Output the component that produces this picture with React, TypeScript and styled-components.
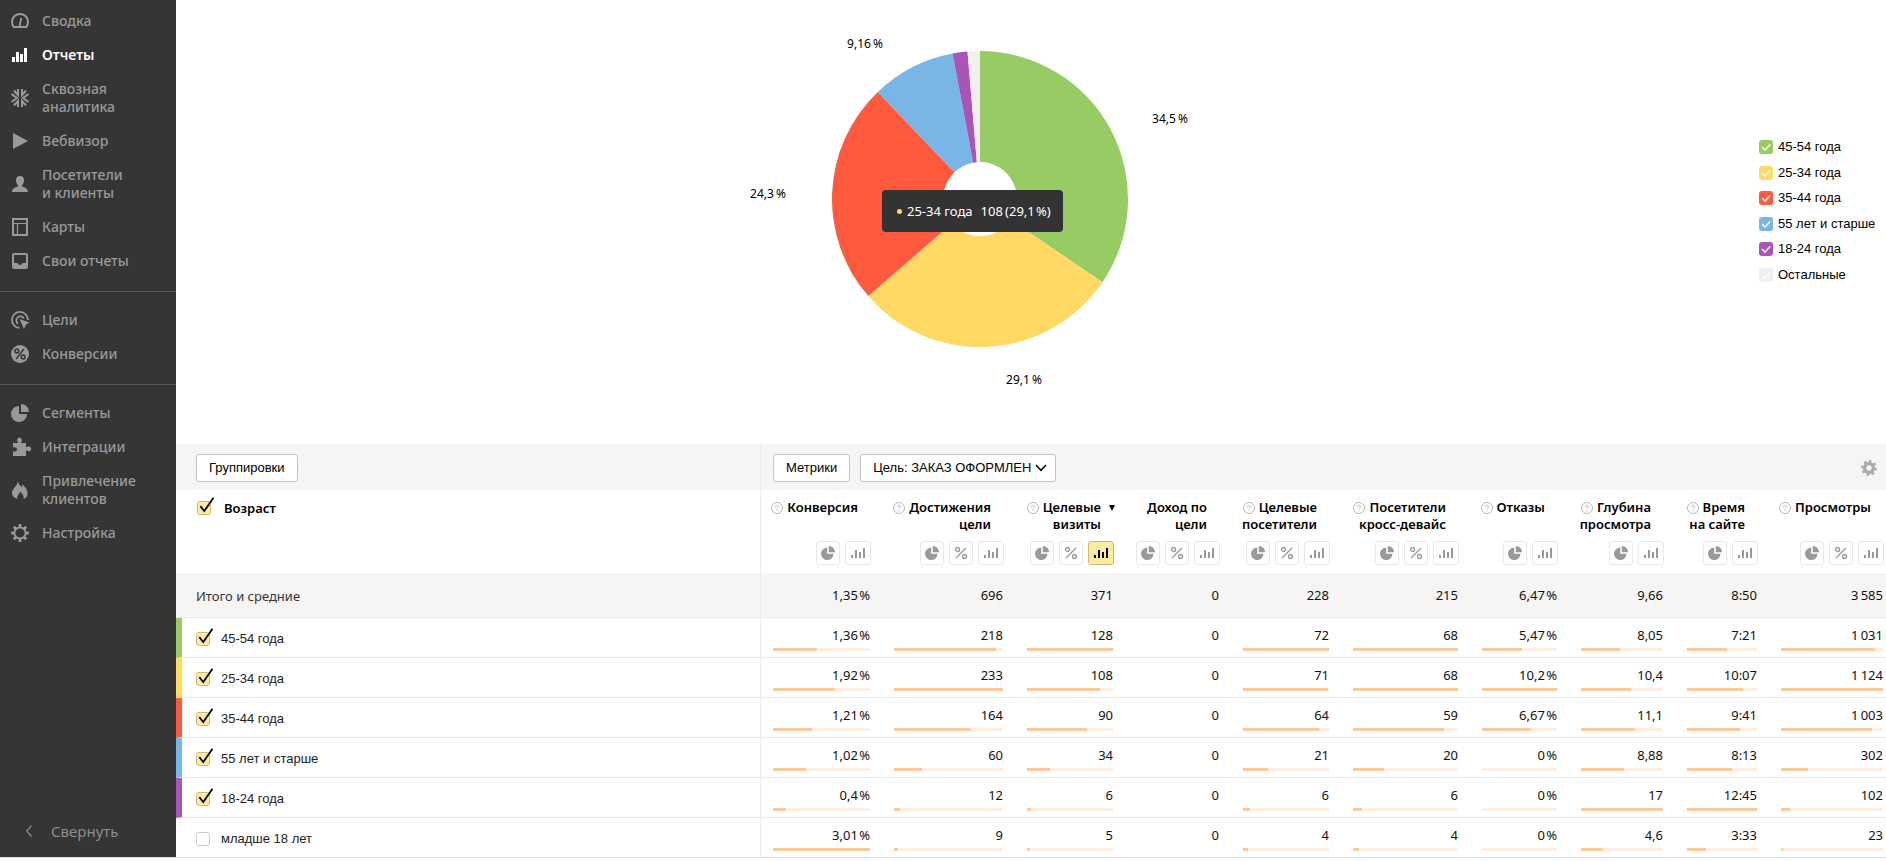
import React from 'react';
import styled, { createGlobalStyle } from 'styled-components';

const TEXT = '"Noto Sans", "Open Sans", sans-serif';
const CONTROL = '"Liberation Sans", Arial, sans-serif';

const GlobalStyle = createGlobalStyle`
  *, *::before, *::after { box-sizing: border-box; }
  body { margin: 0; background: #fff; color: #000; font-family: ${TEXT}; font-size: 13px; }
`;

/* ---------- shell ---------- */

const Page = styled.div`
  display: flex;
  align-items: stretch;
  border-bottom: 1px solid #ddd;
`;

const Sidebar = styled.nav`
  flex: none;
  width: 176px;
  padding: 4px 0 9px;
  display: flex;
  flex-direction: column;
  background: #353535;
`;

const MenuGroup = styled.ul`
  list-style: none;
  margin: 0;
  padding: 0 0 13px;

  & + & {
    border-top: 1px solid #555;
    padding-top: 11px;
  }
`;

const MenuLink = styled.a<{ $active?: boolean }>`
  display: flex;
  align-items: center;
  gap: 13px;
  padding: 8px 10px 8px 11px;
  color: ${(p) => (p.$active ? '#fff' : '#999')};
  font-size: 14px;
  font-weight: ${(p) => (p.$active ? 600 : 500)};
  line-height: 18px;
  text-decoration: none;
  white-space: pre-line;

  svg { flex: none; overflow: visible; }
`;

const Collapse = styled.button`
  display: flex;
  align-items: center;
  gap: 19px;
  margin-top: auto;
  padding: 8px 26px;
  border: 0;
  background: none;
  color: #8c8c8c;
  font: 15px/18px ${TEXT};
`;

const Main = styled.main`
  flex: 1;
  min-width: 0;
`;

/* ---------- chart ---------- */

const ChartArea = styled.section`
  display: flex;
  height: 444px;
  padding-left: 25px;
`;

const Plot = styled.div`
  flex: 1;
  display: flex;
  justify-content: center;
`;

const Canvas = styled.div`
  position: relative;
  width: 500px;
  height: 398px;

  svg { display: block; font-family: ${TEXT}; font-size: 12px; }
`;

const Tooltip = styled.div`
  position: absolute;
  left: 152px;
  top: 190px;
  display: flex;
  align-items: center;
  width: 181px;
  height: 42px;
  padding-left: 15px;
  border-radius: 4px;
  background: #333;
  color: #fff;
  font-size: 13px;
  line-height: 18px;
  white-space: pre;
`;

const Dot = styled.span`
  width: 5px;
  height: 5px;
  margin-right: 5px;
  border-radius: 50%;
  background: #ffd963;
`;

const TooltipValue = styled.span`
  margin-left: 8px;
`;

const Legend = styled.div`
  flex: none;
  width: 127px;
  height: 142px;
  margin-top: 140px;
  display: flex;
  flex-direction: column;
  justify-content: space-between;
`;

const LegendItem = styled.label`
  display: flex;
  align-items: center;
  gap: 5px;
  font: 13px/14px ${CONTROL};
  white-space: nowrap;
`;

const LegendBox = styled.span<{ $color: string }>`
  position: relative;
  display: block;
  width: 14px;
  height: 14px;
  border-radius: 3px;
  background: ${(p) => p.$color};

  input { position: absolute; inset: 0; margin: 0; opacity: 0; }
  svg { display: block; }
`;

/* ---------- toolbar ---------- */

const Toolbar = styled.div`
  display: grid;
  grid-template-columns: minmax(0, 1fr) 1125px;
  height: 46px;
  background: #f6f5f3;
`;

const ToolbarCell = styled.div<{ $first?: boolean }>`
  display: flex;
  align-items: center;
  gap: 10px;
  padding: 2px 9px 0 ${(p) => (p.$first ? 20 : 12)}px;
  border-right: ${(p) => (p.$first ? '1px solid #ebebeb' : '0')};
`;

const ToolButton = styled.button`
  height: 28px;
  padding: 0 12px;
  border: 1px solid #c4c3c1;
  border-radius: 3px;
  background: #fff;
  color: #000;
  font: 13px/18px ${CONTROL};
`;

const SelectBox = styled.label`
  position: relative;

  select {
    appearance: none;
    width: 196px;
    height: 28px;
    padding: 0 24px 0 12px;
    border: 1px solid #c4c3c1;
    border-radius: 3px;
    background: #fff;
    color: #000;
    font: 13px/18px ${CONTROL};
  }

  svg { position: absolute; right: 9px; top: 10px; pointer-events: none; }
`;

const GearButton = styled.button`
  width: 16px;
  height: 16px;
  margin-left: auto;
  padding: 0;
  border: 0;
  background: none;
  color: #aaa;

  svg { display: block; }
`;

/* ---------- table ---------- */

const Table = styled.table`
  width: 100%;
  table-layout: fixed;
  border-collapse: separate;
  border-spacing: 0;
`;

const Head = styled.th<{ $first?: boolean }>`
  height: 83px;
  padding: ${(p) => (p.$first ? '9px 20px 0 21px' : '9px 11px 0 6px')};
  vertical-align: top;
  text-align: ${(p) => (p.$first ? 'left' : 'right')};
  font-weight: 600;
  border-right: ${(p) => (p.$first ? '1px solid #ebebeb' : '0')};

  &:last-child { padding-right: 2px; }
`;

const HeadTitle = styled.div`
  position: relative;
  height: 42px;
  padding-right: 13px;
  font-size: 13px;
  line-height: 17px;
  white-space: pre;
`;

const Help = styled.svg`
  width: 12px;
  height: 12px;
  margin-right: 4px;
  vertical-align: -2px;
`;

const SortMark = styled.span`
  position: absolute;
  right: -1px;
  top: 6px;
  border: 3px solid transparent;
  border-top: 6px solid #000;
  border-bottom: 0;
`;

const Chips = styled.div`
  display: flex;
  justify-content: flex-end;
  gap: 5px;
`;

const Chip = styled.button<{ $wide?: boolean; $active?: boolean }>`
  display: flex;
  align-items: center;
  justify-content: center;
  flex: none;
  width: ${(p) => (p.$wide ? 26 : 24)}px;
  height: 24px;
  padding: 0;
  border: 1px solid ${(p) => (p.$active ? '#ccb975' : '#e8e8e8')};
  border-radius: 3px;
  background: ${(p) => (p.$active ? '#ffeba0' : '#fff')};
  color: ${(p) => (p.$active ? '#000' : '#999')};
`;

const TotalCell = styled.td<{ $first?: boolean }>`
  height: 45px;
  padding: 0 12px;
  background: #f6f5f3;
  border-bottom: 1px solid #ebebeb;
  text-align: right;
  line-height: 18px;
  color: #111;

  &:last-child { padding-right: 3px; }

  ${(p) => p.$first && `
    padding: 2px 20px 0;
    text-align: left;
    border-right: 1px solid #ebebeb;
    color: #333;
  `}
`;

const Row = styled.tr`
  & > * { height: 40px; border-bottom: 1px solid #ebebeb; }
  &:last-child > * { height: 39px; border-bottom: 0; }
`;

const RowHead = styled.th<{ $color: string }>`
  padding: 3px 20px 0 14px;
  border-left: 6px solid ${(p) => p.$color};
  border-right: 1px solid #ebebeb;
  font: 13px/18px ${CONTROL};
  color: #222;
  text-align: left;
`;

const Cell = styled.td`
  padding: 8px 12px 0;
  vertical-align: top;
  text-align: right;
  line-height: 18px;
  color: #111;

  &:last-child { padding-right: 3px; }
`;

const Bar = styled.div`
  height: 3px;
  margin-top: 4px;
  background: #ffeee0;
`;

const BarFill = styled.div`
  height: 3px;
  background: #fbcb9c;
`;

const CheckLabel = styled.label<{ $gap: number }>`
  display: flex;
  align-items: center;
  gap: ${(p) => p.$gap}px;
  line-height: 18px;
`;

const Box = styled.span`
  position: relative;
  flex: none;
  width: 14px;
  height: 14px;

  input {
    appearance: none;
    display: block;
    width: 14px;
    height: 14px;
    margin: 0;
    border: 1px solid #ccc;
    border-radius: 3px;
    background: #fff;
  }
  input:checked { border-color: #ccb975; background: #ffeba0; }

  svg { position: absolute; left: 0; top: 0; overflow: visible; pointer-events: none; }
`;

/* ---------- icons ---------- */

const PIE_MARK = 'M8 2 V10 H16 A8 8 0 1 1 8 2 Z M10 0 A8 8 0 0 1 18 8 H10 Z';

const gearPath = (teeth: number, outer: number, inner: number) => {
  const step = (Math.PI * 2) / teeth;
  const pts: string[] = [];
  for (let i = 0; i < teeth; i += 1) {
    const a = i * step - Math.PI / 2;
    [[-0.28, inner], [-0.2, outer], [0.2, outer], [0.28, inner]].forEach(([k, r]) => {
      const t = a + k * step;
      pts.push(`${(Math.cos(t) * r).toFixed(2)} ${(Math.sin(t) * r).toFixed(2)}`);
    });
  }
  return `M${pts.join('L')}Z`;
};

const ICONS: Record<string, React.ReactNode> = {
  gauge: (
    <g fill="none" stroke="currentColor" strokeWidth="2">
      <path d="M2.8 15 A8 8 0 1 1 15.2 15 Z" strokeLinejoin="round" />
      <path d="M8.6 14 L10.2 6" strokeWidth="1.8" />
    </g>
  ),
  bars: <path fill="currentColor" d="M1 11h3v5H1zM5 6h3v10H5zM9 8h3v8H9zM13 2h3v14h-3z" />,
  flake: (
    <g fill="none" stroke="currentColor" strokeWidth="2">
      <path d="M.5 5 L6 9 L.5 13 M17.500 5 L12 9 L17.500 13" />
      <path d="M7 0 V6 L3 1.500 M11 0 V6 L15 1.500 M7 18 V12 L3 16.500 M11 18 V12 L15 16.500" />
    </g>
  ),
  play: <path fill="currentColor" d="M2 1 L17 9 L2 17 Z" />,
  person: (
    <path
      fill="currentColor"
      d="M9 1c2.800 0 4.200 2 4 4.500c-.1 2-.9 3.600-1.800 4.500v1.600c1.500 .8 5.800 1.200 5.800 5.400H1c0-4.200 4.300-4.600 5.800-5.400V10C5.900 9.100 5.100 7.500 5 5.500C4.800 3 6.200 1 9 1z"
    />
  ),
  map: (
    <g fill="none" stroke="currentColor">
      <rect x="2" y="1" width="14" height="16" strokeWidth="2" />
      <path d="M2 5.500H16 M6.500 5V17" strokeWidth="1.200" />
    </g>
  ),
  inbox: (
    <path
      fill="currentColor"
      fillRule="evenodd"
      d="M3 1h12a2 2 0 0 1 2 2v12a2 2 0 0 1-2 2H3a2 2 0 0 1-2-2V3a2 2 0 0 1 2-2zM3 3v8h3c.6 0 .8 .7 1.200 1.300c.9 1 2.700 1 3.600 0c.4-.6 .6-1.300 1.200-1.300h3V3z"
    />
  ),
  target: (
    <g fill="none" stroke="currentColor" strokeWidth="1.800">
      <path d="M8.500 16.900 A8 8 0 1 1 16.900 9" />
      <path d="M7 12.700 A4 4 0 1 1 12.800 7.500" />
      <path d="M8.500 8 L18.500 11.500 L15 13.500 L13 18 Z" fill="currentColor" stroke="none" />
    </g>
  ),
  percent: (
    <g>
      <circle cx="9" cy="9" r="9" fill="currentColor" />
      <g fill="none" stroke="#353535" strokeWidth="1.500">
        <circle cx="5.800" cy="6" r="1.900" />
        <circle cx="12.200" cy="12" r="1.900" />
        <path d="M12.800 4 L5.200 14" />
      </g>
    </g>
  ),
  pie: <path fill="currentColor" d={PIE_MARK} />,
  puzzle: (
    <path
      fill="currentColor"
      d="M2 5h4.800V4a2.500 2.500 0 1 1 3.400 0v1H15v4h1.200a2.400 2.400 0 1 1 0 3.600H15V18H2v-4.500h1.200a2.200 2.200 0 1 0 0-4.200H2z"
    />
  ),
  fire: (
    <path
      fill="currentColor"
      d="M6.800 0c.4 2.800 1.600 3.700 3.800 6.200c.6-1 .9-1.800 1-3c2.200 2.600 5 5.400 5 9c0 2.800-1.600 5-4.100 5.800c.8-2.800-1-5.200-3.500-7.500c-.3 2.500-3.500 3.900-2.500 7.500C3.500 17.200 1 15 1 11.800C1 7.500 6.600 5.500 6.800 0z"
    />
  ),
  gear: (
    <path
      transform="translate(9 9)"
      fill="currentColor"
      fillRule="evenodd"
      d={`${gearPath(8, 9, 6.5)}M4.600 0A4.600 4.600 0 1 0-4.600 0A4.600 4.600 0 1 0 4.600 0Z`}
    />
  ),
};

const MenuIcon = ({ name }: { name: string }) => (
  <svg width="18" height="18" viewBox="0 0 18 18" aria-hidden="true">{ICONS[name]}</svg>
);

const ChipIcon = ({ kind }: { kind: ChipKind }) => (
  <svg width="14" height="14" viewBox="0 0 14 14" aria-hidden="true">
    {kind === 'pie' && <path fill="currentColor" transform="scale(.78)" d={PIE_MARK} />}
    {kind === 'percent' && (
      <g fill="none" stroke="currentColor" strokeWidth="1.300">
        <circle cx="3.500" cy="3.500" r="2" />
        <circle cx="10.500" cy="10.500" r="2" />
        <path d="M12 2 L2 12" />
      </g>
    )}
    {kind === 'bars' && <path fill="currentColor" d="M0 9h2v3H0zM4 4h2v8H4zM8 6h2v6H8zM12 2h2v10h-2z" />}
  </svg>
);

const HelpIcon = () => (
  <Help viewBox="0 0 12 12" aria-hidden="true">
    <circle cx="6" cy="6" r="5.500" fill="none" stroke="#b8b8b8" />
    <path d="M4.500 4.800a1.500 1.500 0 1 1 2.300 1.200q-.8 .5-.8 1.200M6 8.200v1" fill="none" stroke="#b8b8b8" />
  </Help>
);

/* ---------- data ---------- */

const MENU = [
  [
    ['gauge', 'Сводка'],
    ['bars', 'Отчеты'],
    ['flake', 'Сквозная\nаналитика'],
    ['play', 'Вебвизор'],
    ['person', 'Посетители\nи клиенты'],
    ['map', 'Карты'],
    ['inbox', 'Свои отчеты'],
  ],
  [
    ['target', 'Цели'],
    ['percent', 'Конверсии'],
  ],
  [
    ['pie', 'Сегменты'],
    ['puzzle', 'Интеграции'],
    ['fire', 'Привлечение\nклиентов'],
    ['gear', 'Настройка'],
  ],
];

const SLICES = [
  { name: '45-54 года', color: '#97cc64', visits: 128 },
  { name: '25-34 года', color: '#ffd963', visits: 108 },
  { name: '35-44 года', color: '#ff5a3e', visits: 90 },
  { name: '55 лет и старше', color: '#77b6e7', visits: 34 },
  { name: '18-24 года', color: '#a955b8', visits: 6 },
  { name: 'Остальные', color: '#f1f0ec', visits: 5 },
];

const CALLOUTS = [
  { x: 190, y: -76, text: '34,5\u2009%' },
  { x: 44, y: 185, text: '29,1\u2009%' },
  { x: -212, y: -1, text: '24,3\u2009%' },
  { x: -115, y: -151, text: '9,16\u2009%' },
];

type ChipKind = 'pie' | 'percent' | 'bars';

const TWO: ChipKind[] = ['pie', 'bars'];
const THREE: ChipKind[] = ['pie', 'percent', 'bars'];

const METRICS = [
  { title: 'Конверсия', width: 121, chips: TWO, help: true, bar: true },
  { title: 'Достижения\nцели', width: 133, chips: THREE, help: true, bar: true },
  { title: 'Целевые\nвизиты', width: 110, chips: THREE, help: true, bar: true, sorted: true },
  { title: 'Доход по\nцели', width: 106, chips: THREE, help: false, bar: false },
  { title: 'Целевые\nпосетители', width: 110, chips: THREE, help: true, bar: true },
  { title: 'Посетители\nкросс-девайс', width: 129, chips: THREE, help: true, bar: true },
  { title: 'Отказы', width: 99, chips: TWO, help: true, bar: true },
  { title: 'Глубина\nпросмотра', width: 106, chips: TWO, help: true, bar: true },
  { title: 'Время\nна сайте', width: 94, chips: TWO, help: true, bar: true },
  { title: 'Просмотры', width: 117, chips: THREE, help: true, bar: true },
];

const TOTALS = ['1,35\u200A%', '696', '371', '0', '228', '215', '6,47\u200A%', '9,66', '8:50', '3\u2009585'];

const ROWS = [
  { name: '45-54 года', color: '#97cc64', values: ['1,36\u200A%', '218', '128', '0', '72', '68', '5,47\u200A%', '8,05', '7:21', '1\u2009031'] },
  { name: '25-34 года', color: '#ffd963', values: ['1,92\u200A%', '233', '108', '0', '71', '68', '10,2\u200A%', '10,4', '10:07', '1\u2009124'] },
  { name: '35-44 года', color: '#ff5a3e', values: ['1,21\u200A%', '164', '90', '0', '64', '59', '6,67\u200A%', '11,1', '9:41', '1\u2009003'] },
  { name: '55 лет и старше', color: '#77b6e7', values: ['1,02\u200A%', '60', '34', '0', '21', '20', '0\u200A%', '8,88', '8:13', '302'] },
  { name: '18-24 года', color: '#a955b8', values: ['0,4\u200A%', '12', '6', '0', '6', '6', '0\u200A%', '17', '12:45', '102'] },
  { name: 'младше 18 лет', color: '', values: ['3,01\u200A%', '9', '5', '0', '4', '4', '0\u200A%', '4,6', '3:33', '23'] },
];

const toNumber = (s: string) => {
  if (s.includes(':')) {
    const [m, sec] = s.split(':').map(Number);
    return m * 60 + sec;
  }
  return Number(s.replace(/[\u2009\u200A%]/g, '').replace(',', '.'));
};

const MAXIMA = METRICS.map((_, i) => Math.max(...ROWS.map((r) => toNumber(r.values[i]))));

/* ---------- parts ---------- */

const Donut = () => {
  const total = SLICES.reduce((s, x) => s + x.visits, 0);
  let angle = 0;
  const at = (r: number, a: number) => `${(Math.sin(a) * r).toFixed(2)} ${(-Math.cos(a) * r).toFixed(2)}`;
  return (
    <svg width="500" height="398" viewBox="-250 -199 500 398" role="img" aria-label="Возраст">
      {SLICES.map((s) => {
        const from = angle;
        angle += (s.visits / total) * Math.PI * 2;
        return (
          <path
            key={s.name}
            fill={s.color}
            d={`M${at(148, from)}A148 148 0 0 1 ${at(148, angle)}L${at(37, angle)}A37 37 0 0 0 ${at(37, from)}Z`}
          />
        );
      })}
      {CALLOUTS.map((c) => (
        <text key={c.text} x={c.x} y={c.y} textAnchor="middle">{c.text}</text>
      ))}
    </svg>
  );
};

const Check = ({ checked, label, gap = 11 }: { checked: boolean; label: string; gap?: number }) => (
  <CheckLabel $gap={gap}>
    <Box>
      <input type="checkbox" defaultChecked={checked} />
      {checked && (
        <svg width="14" height="14" viewBox="0 0 14 14" aria-hidden="true">
          <path d="M3.300 5.200 L7.300 10 L16.500 -3.300" fill="none" stroke="#000" strokeWidth="1.800" />
        </svg>
      )}
    </Box>
    {label}
  </CheckLabel>
);

const CHIP_NAMES = { pie: 'Круговая диаграмма', percent: 'Проценты', bars: 'Столбцы' };

export default function App() {
  return (
    <>
      <GlobalStyle />
      <Page>
        <Sidebar>
          {MENU.map((group) => (
            <MenuGroup key={group[0][0]}>
              {group.map(([icon, label]) => (
                <li key={icon}>
                  <MenuLink href="#" $active={icon === 'bars'}>
                    <MenuIcon name={icon} />
                    {label}
                  </MenuLink>
                </li>
              ))}
            </MenuGroup>
          ))}
          <Collapse type="button">
            <svg width="6" height="12" viewBox="0 0 6 12" aria-hidden="true">
              <path d="M5.500 .5 L.8 6 L5.500 11.500" fill="none" stroke="currentColor" strokeWidth="1.200" />
            </svg>
            Свернуть
          </Collapse>
        </Sidebar>

        <Main>
          <ChartArea>
            <Plot>
              <Canvas>
                <Donut />
                <Tooltip role="tooltip">
                  <Dot />
                  25-34 года
                  <TooltipValue>{'108\u2009(29,1\u200A%)'}</TooltipValue>
                </Tooltip>
              </Canvas>
            </Plot>
            <Legend>
              {SLICES.map((s) => (
                <LegendItem key={s.name}>
                  <LegendBox $color={s.color}>
                    <input type="checkbox" defaultChecked />
                    <svg width="14" height="14" viewBox="0 0 14 14" aria-hidden="true">
                      <path d="M3 7 L6 10 L11.300 4.300" fill="none" stroke="#fff" strokeWidth="1.600" opacity=".9" />
                    </svg>
                  </LegendBox>
                  {s.name}
                </LegendItem>
              ))}
            </Legend>
          </ChartArea>

          <Toolbar>
            <ToolbarCell $first>
              <ToolButton type="button">Группировки</ToolButton>
            </ToolbarCell>
            <ToolbarCell>
              <ToolButton type="button">Метрики</ToolButton>
              <SelectBox>
                <select aria-label="Цель">
                  <option>Цель: ЗАКАЗ ОФОРМЛЕН</option>
                </select>
                <svg width="12" height="8" viewBox="0 0 12 8" aria-hidden="true">
                  <path d="M1 1 L6 6.300 L11 1" fill="none" stroke="#000" strokeWidth="1.500" />
                </svg>
              </SelectBox>
              <GearButton type="button" aria-label="Настройки таблицы">
                <svg width="16" height="16" viewBox="-8 -8 16 16">
                  <path
                    fill="currentColor"
                    fillRule="evenodd"
                    d={`${gearPath(8, 8, 6)}M2.700 0A2.700 2.700 0 1 0-2.700 0A2.700 2.700 0 1 0 2.700 0Z`}
                    transform="rotate(10)"
                  />
                </svg>
              </GearButton>
            </ToolbarCell>
          </Toolbar>

          <Table>
            <colgroup>
              <col />
              {METRICS.map((m) => <col key={m.title} width={m.width} />)}
            </colgroup>
            <thead>
              <tr>
                <Head $first scope="col">
                  <Check checked label="Возраст" gap={13} />
                </Head>
                {METRICS.map((m) => (
                  <Head key={m.title} scope="col">
                    <HeadTitle>
                      {m.help && <HelpIcon />}
                      {m.title}
                      {m.sorted && <SortMark />}
                    </HeadTitle>
                    <Chips>
                      {m.chips.map((kind) => (
                        <Chip
                          key={kind}
                          type="button"
                          aria-label={CHIP_NAMES[kind]}
                          $wide={kind === 'bars'}
                          $active={m.sorted && kind === 'bars'}
                        >
                          <ChipIcon kind={kind} />
                        </Chip>
                      ))}
                    </Chips>
                  </Head>
                ))}
              </tr>
            </thead>
            <tbody>
              <tr>
                <TotalCell $first>Итого и средние</TotalCell>
                {TOTALS.map((v, i) => <TotalCell key={METRICS[i].title}>{v}</TotalCell>)}
              </tr>
              {ROWS.map((r) => (
                <Row key={r.name}>
                  <RowHead scope="row" $color={r.color || 'transparent'}>
                    <Check checked={r.color !== ''} label={r.name} />
                  </RowHead>
                  {r.values.map((v, i) => (
                    <Cell key={METRICS[i].title}>
                      {v}
                      {METRICS[i].bar && (
                        <Bar>
                          <BarFill style={{ width: `${(toNumber(v) / MAXIMA[i]) * 100}%` }} />
                        </Bar>
                      )}
                    </Cell>
                  ))}
                </Row>
              ))}
            </tbody>
          </Table>
        </Main>
      </Page>
    </>
  );
}
